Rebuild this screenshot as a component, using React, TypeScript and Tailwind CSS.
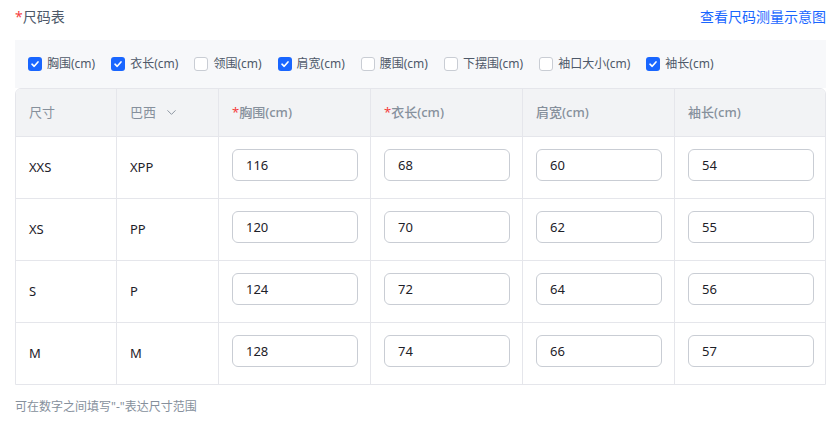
import { ChevronDown } from "lucide-react";

const font = { fontFamily: '"Noto Sans", "Noto Sans CJK SC", sans-serif' };

const options = [
  { label: "胸围(cm)", checked: true },
  { label: "衣长(cm)", checked: true },
  { label: "领围(cm)", checked: false },
  { label: "肩宽(cm)", checked: true },
  { label: "腰围(cm)", checked: false },
  { label: "下摆围(cm)", checked: false },
  { label: "袖口大小(cm)", checked: false },
  { label: "袖长(cm)", checked: true },
];

const rows = [
  { size: "XXS", br: "XPP", vals: ["116", "68", "60", "54"] },
  { size: "XS", br: "PP", vals: ["120", "70", "62", "55"] },
  { size: "S", br: "P", vals: ["124", "72", "64", "56"] },
  { size: "M", br: "M", vals: ["128", "74", "66", "57"] },
];

const measureCols = [
  { label: "胸围(cm)", required: true },
  { label: "衣长(cm)", required: true },
  { label: "肩宽(cm)", required: false },
  { label: "袖长(cm)", required: false },
];

const Check = ({ checked }: { checked: boolean }) =>
  checked ? (
    <span className="w-[14px] h-[14px] rounded-[3px] bg-[#1966ff] flex items-center justify-center">
      <svg width="10" height="10" viewBox="0 0 10 10" fill="none">
        <path d="M2 5.2L4.2 7.3L8 2.9" stroke="white" strokeWidth="1.6" strokeLinecap="round" strokeLinejoin="round" />
      </svg>
    </span>
  ) : (
    <span className="w-[14px] h-[14px] rounded-[3px] bg-white border border-[#c9cdd4]" />
  );

const App = () => {
  return (
    <div className="w-[839px] h-[423px] bg-white pl-[15px] pr-[13px] pt-[6px]" style={font}>
      {/* title row */}
      <div className="flex items-center justify-between h-[20px]">
        <div className="text-[14px] text-[#4e5969]">
          <span className="text-[#f53f3f]">*</span>尺码表
        </div>
        <a className="text-[14px] text-[#1966ff] cursor-pointer">查看尺码测量示意图</a>
      </div>

      {/* checkbox bar */}
      <div className="mt-[14px] h-[48px] bg-[#f7f8fa] flex items-center pl-[13px] gap-4">
        {options.map((o) => (
          <label key={o.label} className="flex items-center gap-[5px] text-[12px] text-[#4e5969]">
            <Check checked={o.checked} />
            {o.label}
          </label>
        ))}
      </div>

      {/* table */}
      <div className="border border-[#e5e6eb] rounded-t-[6px] overflow-hidden">
        <div className="grid grid-cols-[101px_102px_152px_152px_152px_1fr] h-[47px] bg-[#f2f3f5] text-[13px] text-[#86909c]">
          <div className="flex items-center pl-[13px] border-r border-[#e5e6eb]">尺寸</div>
          <div className="flex items-center pl-[13px] border-r border-[#e5e6eb] gap-[8px]">
            巴西
            <ChevronDown size={15} strokeWidth={1.5} />
          </div>
          {measureCols.map((c, i) => (
            <div
              key={c.label}
              className={`flex items-center pl-[13px] font-medium ${i < 3 ? "border-r border-[#e5e6eb]" : ""}`}
            >
              {c.required && <span className="text-[#f53f3f] font-normal">*</span>}
              {c.label}
            </div>
          ))}
        </div>
        {rows.map((r) => (
          <div
            key={r.size}
            className="grid grid-cols-[101px_102px_152px_152px_152px_1fr] h-[62px] border-t border-[#e5e6eb] text-[13px] text-[#1d2129]"
          >
            <div className="flex items-center pl-[13px] border-r border-[#e5e6eb]">{r.size}</div>
            <div className="flex items-center pl-[13px] border-r border-[#e5e6eb]">{r.br}</div>
            {r.vals.map((v, i) => (
              <div
                key={i}
                className={`flex items-start pt-[12px] pl-[13px] ${i < 3 ? "border-r border-[#e5e6eb]" : ""}`}
              >
                <input
                  defaultValue={v}
                  className="w-[126px] h-[32px] rounded-[6px] border border-[#c9cdd4] px-[13px] text-[13px] text-[#1d2129] outline-none"
                  style={font}
                />
              </div>
            ))}
          </div>
        ))}
      </div>

      <div className="mt-[13px] text-[12px] text-[#86909c]">可在数字之间填写"-"表达尺寸范围</div>
    </div>
  );
};

export default App;
